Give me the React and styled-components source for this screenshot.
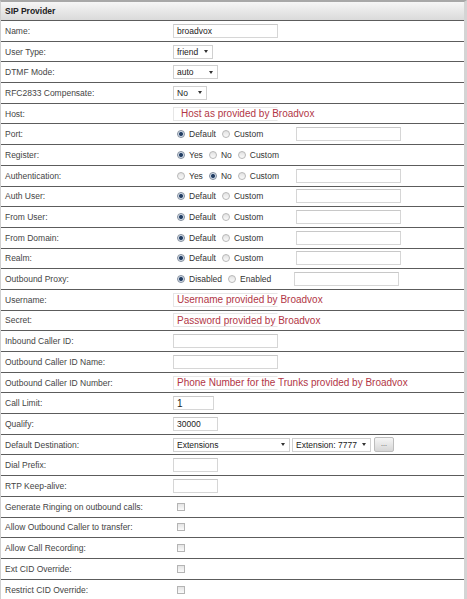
import styled, { createGlobalStyle } from 'styled-components'

const GlobalStyle = createGlobalStyle`
  body {
    margin: 0;
    background: #fff;
    font-family: "Liberation Sans", Arial, sans-serif;
  }
`

const Panel = styled.div`
  width: 467px;
  box-sizing: border-box;
  border-top: 2px solid #a8a8a8;
  border-left: 1px solid #d0d0d0;
  border-right: 3px solid #d4d4d4;
  border-bottom: 2px solid #9a9a9a;
`

const Header = styled.div`
  height: 19px;
  box-sizing: border-box;
  padding-left: 4px;
  display: flex;
  align-items: center;
  font-size: 8.5px;
  font-weight: bold;
  color: #222;
  background: linear-gradient(#f6f6f6, #dadada);
  border-bottom: 1px solid #5c5c5c;
`

const Row = styled.div`
  height: 20.7px;
  box-sizing: border-box;
  display: grid;
  grid-template-columns: 172px 1fr;
  align-items: center;
  border-bottom: 1px solid #5c5c5c;
  &:last-child {
    border-bottom: none;
  }
`

const Label = styled.div`
  padding-left: 4px;
  font-size: 8.5px;
  color: #444;
  white-space: nowrap;
`

const Field = styled.div`
  display: flex;
  align-items: center;
  gap: ${(p) => p.$gap ?? 0}px;
  font-size: 8.5px;
  color: #333;
`

const Box = styled.div`
  width: ${(p) => p.$w}px;
  height: 14px;
  box-sizing: border-box;
  border: 1px solid #d6d6d6;
  border-top-color: #c8c8c8;
  background: #fff;
  display: flex;
  align-items: center;
  padding-left: 3px;
  font-size: ${(p) => (p.$big ? 10 : 8.5)}px;
  color: #222;
  white-space: nowrap;
  margin-left: ${(p) => p.$ml ?? 0}px;
`

const Note = styled(Box)`
  font-size: 10px;
  color: #b23646;
  padding-left: ${(p) => p.$pad ?? 3}px;
  overflow: visible;
  border-color: #e6e6e6;
  border-right-color: transparent;
`

const SelectBox = styled.div`
  width: ${(p) => p.$w}px;
  height: 14px;
  box-sizing: border-box;
  border: 1px solid #d0d0d0;
  background: #fff;
  display: flex;
  align-items: center;
  justify-content: space-between;
  padding: 0 4px 0 3px;
  font-size: 8.5px;
  color: #222;
  white-space: nowrap;
`

const Arrow = styled.span`
  width: 0;
  height: 0;
  border-left: 2.5px solid transparent;
  border-right: 2.5px solid transparent;
  border-top: 3px solid #333;
`

const DotsButton = styled.div`
  width: 20px;
  height: 15px;
  box-sizing: border-box;
  margin-left: 1px;
  border: 1px solid #bdbdbd;
  border-radius: 2px;
  background: linear-gradient(#f6f6f6, #d6d6d6);
  display: flex;
  align-items: center;
  justify-content: center;
  font-size: 7px;
  color: #444;
  padding-bottom: 2px;
`

const Radio = styled.span`
  width: 8px;
  height: 8px;
  box-sizing: border-box;
  border-radius: 50%;
  border: 1px solid ${(p) => (p.$on ? '#7f8c9c' : '#b8b8b8')};
  background: ${(p) =>
    p.$on
      ? 'radial-gradient(circle, #1d3350 0, #2e4a70 1.6px, #cfd9e6 2.4px, #f4f4f4 3.5px)'
      : 'linear-gradient(#e2e2e2, #fafafa)'};
  margin: 0 4px 0 ${(p) => p.$ml ?? 0}px;
  flex: none;
`

const Check = styled.span`
  width: 8px;
  height: 8px;
  box-sizing: border-box;
  border: 1px solid #b4b4b4;
  background: linear-gradient(#e4e4e4, #fbfbfb);
  margin-left: 4px;
`

const Choices = ({ options, checked, input }) => (
  <Field>
    {options.map((o, i) => (
      <Field key={o}>
        <Radio $on={i === checked} $ml={i === 0 ? 4 : 6} />
        {o}
      </Field>
    ))}
    {input && <Box $w={105} $ml={input} />}
  </Field>
)

const rows = [
  ['Name:', <Box $w={105}>broadvox</Box>],
  ['User Type:', <SelectBox $w={40}>friend<Arrow /></SelectBox>],
  ['DTMF Mode:', <SelectBox $w={45}>auto<Arrow /></SelectBox>],
  ['RFC2833 Compensate:', <SelectBox $w={34}>No<Arrow /></SelectBox>],
  ['Host:', <Note $w={105} $pad={7}>Host as provided by Broadvox</Note>],
  ['Port:', <Choices options={['Default', 'Custom']} checked={0} input={33} />],
  ['Register:', <Choices options={['Yes', 'No', 'Custom']} checked={0} />],
  ['Authentication:', <Choices options={['Yes', 'No', 'Custom']} checked={1} input={17} />],
  ['Auth User:', <Choices options={['Default', 'Custom']} checked={0} input={33} />],
  ['From User:', <Choices options={['Default', 'Custom']} checked={0} input={33} />],
  ['From Domain:', <Choices options={['Default', 'Custom']} checked={0} input={33} />],
  ['Realm:', <Choices options={['Default', 'Custom']} checked={0} input={33} />],
  ['Outbound Proxy:', <Choices options={['Disabled', 'Enabled']} checked={0} input={23} />],
  ['Username:', <Note $w={105}>Username provided by Broadvox</Note>],
  ['Secret:', <Note $w={105}>Password provided by Broadvox</Note>],
  ['Inbound Caller ID:', <Box $w={105} />],
  ['Outbound Caller ID Name:', <Box $w={105} />],
  ['Outbound Caller ID Number:', <Note $w={105}>Phone Number for the Trunks provided by Broadvox</Note>],
  ['Call Limit:', <Box $w={41} $big>1</Box>],
  ['Qualify:', <Box $w={45}>30000</Box>],
  [
    'Default Destination:',
    <Field $gap={2}>
      <SelectBox $w={117}>Extensions<Arrow /></SelectBox>
      <SelectBox $w={79}>Extension: 7777<Arrow /></SelectBox>
      <DotsButton>...</DotsButton>
    </Field>,
  ],
  ['Dial Prefix:', <Box $w={45} />],
  ['RTP Keep-alive:', <Box $w={45} />],
  ['Generate Ringing on outbound calls:', <Check />],
  ['Allow Outbound Caller to transfer:', <Check />],
  ['Allow Call Recording:', <Check />],
  ['Ext CID Override:', <Check />],
  ['Restrict CID Override:', <Check />],
]

const App = () => {
  return (
    <>
      <GlobalStyle />
      <Panel>
        <Header>SIP Provider</Header>
        {rows.map(([label, control]) => (
          <Row key={label}>
            <Label>{label}</Label>
            <Field>{control}</Field>
          </Row>
        ))}
      </Panel>
    </>
  )
}

export default App
